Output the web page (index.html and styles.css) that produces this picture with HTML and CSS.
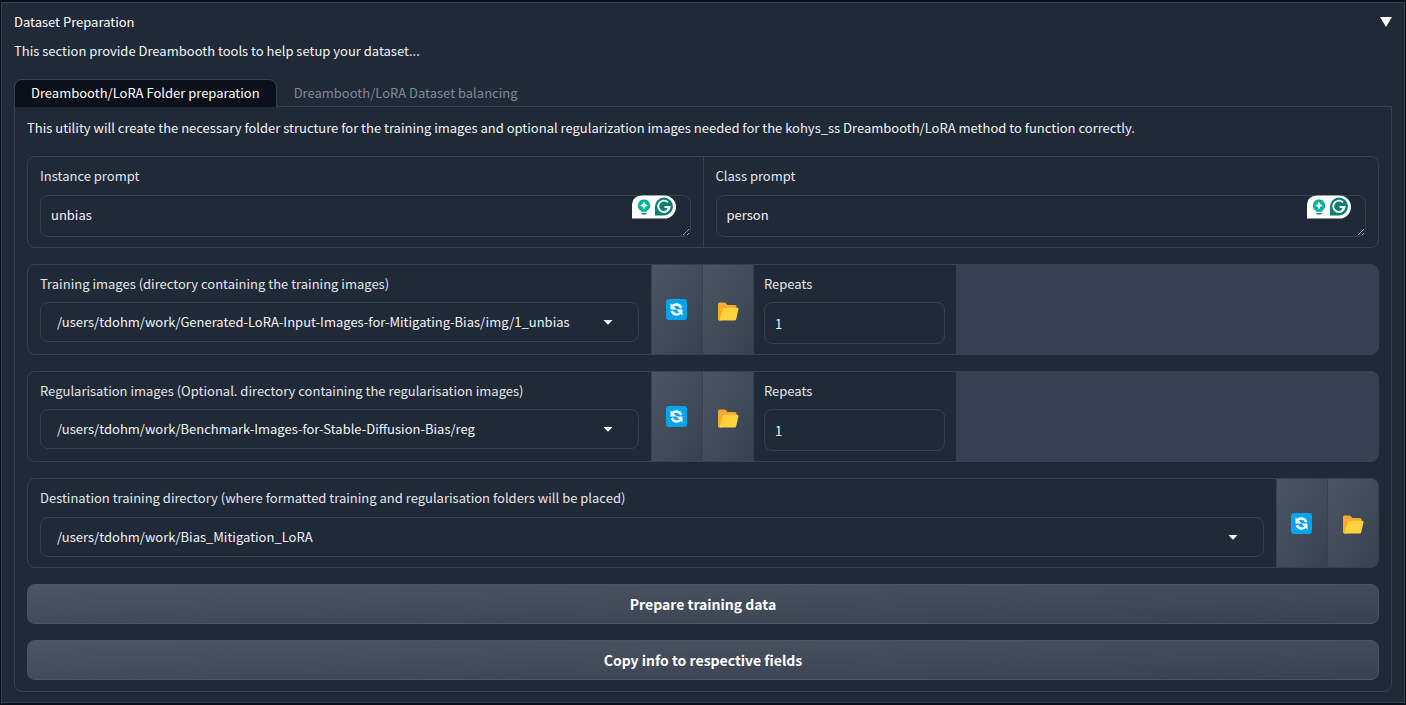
FILE: index.html
```html
<!DOCTYPE html>
<html lang="en">
<head>
<meta charset="utf-8">
<title>Dataset Preparation</title>
<link rel="stylesheet" href="styles.css">
</head>
<body>
<svg class="sprites" aria-hidden="true">
  <symbol id="refresh" viewBox="0 0 21 21">
    <rect width="21" height="21" rx="3" fill="#00a4ef"/>
    <path d="M6.2 7.2C8.8 4.4 13.6 4.9 15.2 9M14.8 13.8C12.2 16.6 7.4 16.1 5.8 12" fill="none" stroke="#fff" stroke-width="2.4"/>
    <path d="M4.5 4.2v6.2h6.2zM16.5 16.8v-6.2h-6.2z" fill="#fff"/>
  </symbol>
  <symbol id="folder" viewBox="0 0 22 19">
    <path d="M1 2Q1 .5 2.5.5H7.2Q8 .5 8.6 1.100L10.500 3H18Q19.500 3 19.500 4.500V12L4 18.500H2.500Q1 18.500 1 17z" fill="#ffa92e"/>
    <path d="M7.600 5.800H20.300Q21.900 5.800 21.500 7.300L19.200 17.200Q18.900 18.500 17.500 18.500H2.300L5.700 7.200Q6.200 5.800 7.600 5.800z" fill="#ffd23e"/>
  </symbol>
  <symbol id="caret" viewBox="0 0 10 5"><path d="M.5 0h9L5 4.800z" fill="#fff"/></symbol>
  <symbol id="assistant" viewBox="0 0 44 24">
    <path d="M0 24V11Q0 .5 11 .5H32.500A11.500 11.500 0 0 1 32.500 23.500H0z" fill="#fff"/>
    <path d="M12 4.500a6 6 0 0 1 3.400 11l-.8 1.300H9.400l-.8-1.300A6 6 0 0 1 12 4.500z" fill="#00b294"/>
    <path d="M12 7.200l1 2.300 2.300 1-2.300 1-1 2.300-1-2.300-2.300-1 2.300-1z" fill="#fff" stroke="#fff" stroke-width=".7"/>
    <path d="M9 18h6l-1 1.500h-4z" fill="#008f78"/>
    <path d="M23 20.500V11.500A9 9 0 1 1 32 20.500z" fill="#087f70"/>
    <path d="M36 7.300A5.700 5.700 0 1 0 37.600 12H32.500M37.700 12l-2.600 3" fill="none" stroke="#fff" stroke-width="1.900"/>
  </symbol>
</svg>

<main class="frame">
  <details class="section" open>
    <summary class="section-head">
      <span>Dataset Preparation</span>
      <svg class="toggle" viewBox="0 0 12 10" aria-hidden="true"><path d="M0 0h12L6 10z" fill="#fff"/></svg>
    </summary>
    <p class="intro">This section provide Dreambooth tools to help setup your dataset...</p>

    <div class="tabs" role="tablist">
      <button class="tab tab-active" type="button" role="tab" aria-selected="true">Dreambooth/LoRA Folder preparation</button>
      <button class="tab" type="button" role="tab" aria-selected="false">Dreambooth/LoRA Dataset balancing</button>
    </div>

    <div class="panel" role="tabpanel">
      <p class="help">This utility will create the necessary folder structure for the training images and optional regularization images needed for the kohys_ss Dreambooth/LoRA method to function correctly.</p>

      <div class="group">
        <div class="field field-half">
          <label for="instance">Instance prompt</label>
          <div class="control">
            <textarea id="instance" class="box" rows="1" spellcheck="false">unbias</textarea>
            <svg class="assistant" aria-hidden="true"><use href="#assistant"/></svg>
          </div>
        </div>
        <div class="field field-half">
          <label for="class">Class prompt</label>
          <div class="control">
            <textarea id="class" class="box" rows="1" spellcheck="false">person</textarea>
            <svg class="assistant" aria-hidden="true"><use href="#assistant"/></svg>
          </div>
        </div>
      </div>

      <div class="group group-columns">
        <div class="field">
          <label for="train">Training images (directory containing the training images)</label>
          <div class="control">
            <select id="train" class="box picker"><option>/users/tdohm/work/Generated-LoRA-Input-Images-for-Mitigating-Bias/img/1_unbias</option></select>
            <svg class="caret" aria-hidden="true"><use href="#caret"/></svg>
          </div>
        </div>
        <button class="tool" type="button" aria-label="Refresh training images"><svg class="icon-refresh"><use href="#refresh"/></svg></button>
        <button class="tool" type="button" aria-label="Browse training images"><svg class="icon-folder"><use href="#folder"/></svg></button>
        <div class="field field-number">
          <label for="train-repeats">Repeats</label>
          <input id="train-repeats" class="box number" type="number" value="1">
        </div>
      </div>

      <div class="group group-columns">
        <div class="field">
          <label for="reg">Regularisation images (Optional. directory containing the regularisation images)</label>
          <div class="control">
            <select id="reg" class="box picker"><option>/users/tdohm/work/Benchmark-Images-for-Stable-Diffusion-Bias/reg</option></select>
            <svg class="caret" aria-hidden="true"><use href="#caret"/></svg>
          </div>
        </div>
        <button class="tool" type="button" aria-label="Refresh regularisation images"><svg class="icon-refresh"><use href="#refresh"/></svg></button>
        <button class="tool" type="button" aria-label="Browse regularisation images"><svg class="icon-folder"><use href="#folder"/></svg></button>
        <div class="field field-number">
          <label for="reg-repeats">Repeats</label>
          <input id="reg-repeats" class="box number" type="number" value="1">
        </div>
      </div>

      <div class="group">
        <div class="field field-wide">
          <label for="dest">Destination training directory (where formatted training and regularisation folders will be placed)</label>
          <div class="control">
            <select id="dest" class="box picker"><option>/users/tdohm/work/Bias_Mitigation_LoRA</option></select>
            <svg class="caret" aria-hidden="true"><use href="#caret"/></svg>
          </div>
        </div>
        <button class="tool" type="button" aria-label="Refresh destination"><svg class="icon-refresh"><use href="#refresh"/></svg></button>
        <button class="tool" type="button" aria-label="Browse destination"><svg class="icon-folder"><use href="#folder"/></svg></button>
      </div>

      <button class="action" type="button">Prepare training data</button>
      <button class="action" type="button">Copy info to respective fields</button>
    </div>
  </details>
</main>
</body>
</html>
```

FILE: styles.css
```css
:root {
  --page: #0b0f19;
  --surface: #1f2937;
  --line: #374151;
  --line-strong: #4b5563;
  --text: #f3f4f6;
}

* { box-sizing: border-box; }

body {
  margin: 0;
  padding: 2px 1px;
  background: var(--page);
  color: var(--text);
  font: 13px/20px "Noto Sans CJK SC", "Noto Sans", sans-serif;
}

button, input, select, textarea { margin: 0; color: inherit; font: inherit; }
p { margin: 0; }
svg { display: block; }
.sprites { position: absolute; width: 0; height: 0; }

.frame {
  padding: 9px 12px 10px;
  border: 1px solid var(--line);
  background: var(--surface);
}

.section-head {
  display: flex;
  align-items: center;
  justify-content: space-between;
  color: #fff;
  list-style: none;
  cursor: pointer;
}
.toggle { width: 12px; height: 10px; }
.intro { margin: 9px 0 18px; }

.tabs { display: flex; margin-bottom: -1px; }
.tab {
  height: 28px;
  padding: 0 16px 2px;
  border: 1px solid transparent;
  border-bottom: 0;
  border-radius: 8px 8px 0 0;
  background: none;
  color: #818997;
}
.tab-active {
  position: relative;
  border-color: var(--line);
  background: var(--page);
  color: #fff;
}

.panel {
  display: flex;
  flex-direction: column;
  gap: 16px;
  padding: 11px 12px;
  border: 1px solid var(--line);
  border-radius: 0 0 8px 8px;
}
.help { margin-bottom: 2px; }

.group {
  display: flex;
  gap: 1px;
  overflow: hidden;
  border: 1px solid var(--line);
  border-radius: 8px;
  background: var(--line);
}
.group-columns {
  display: grid;
  grid-template-columns: minmax(0, 623fr) 50px 50px minmax(0, 202fr) minmax(0, 421fr);
}
.field {
  min-width: 0;
  padding: 9px 12px 12px;
  background: var(--surface);
}
.field-half { flex: 1; padding-bottom: 10px; }
.field-wide { flex: 1; padding-bottom: 10px; }
.field-number { padding: 9px 11px 10px 10px; }
.field label { display: block; margin-bottom: 8px; color: #e5e7eb; }
.field-half label, .field-wide label { margin-bottom: 9px; }

.control { position: relative; }
.box {
  display: block;
  width: 100%;
  border: 1px solid var(--line);
  border-radius: 8px;
  outline: 0;
  background: var(--surface);
}
textarea.box {
  height: 42px;
  padding: 9px 10px;
  overflow: hidden;
  resize: vertical;
  color-scheme: dark;
}
.picker { height: 40px; padding: 0 40px 0 16px; appearance: none; }
.number { height: 42px; padding: 0 10px; appearance: textfield; }
.number::-webkit-inner-spin-button { appearance: none; }

.caret {
  position: absolute;
  top: 18px;
  right: 26px;
  width: 10px;
  height: 5px;
  pointer-events: none;
}
.assistant {
  position: absolute;
  top: 0;
  right: 15px;
  width: 44px;
  height: 24px;
}

.tool {
  display: flex;
  align-items: center;
  justify-content: center;
  width: 50px;
  padding: 0 1px 0 0;
  border: 0;
  background: linear-gradient(to bottom right, #4b5563, #374151);
}
.icon-refresh { width: 21px; height: 21px; }
.icon-folder { width: 22px; height: 19px; margin-top: 3px; }

.action {
  height: 40px;
  border: 1px solid var(--line-strong);
  border-radius: 8px;
  background: linear-gradient(to bottom right, #4b5563, #374151);
  color: #fff;
  font-size: 14px;
  font-weight: 600;
}
```
